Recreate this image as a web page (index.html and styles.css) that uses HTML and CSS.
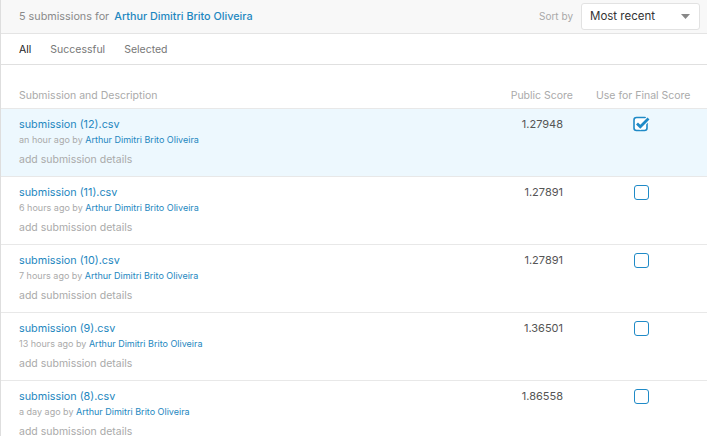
FILE: index.html
```html
<!DOCTYPE html>
<html>
<head>
<meta charset="utf-8">
<link rel="stylesheet" href="styles.css">
</head>
<body>
<div class="page">
  <div class="topbar">
    <div class="count">5 submissions for <a class="user">Arthur Dimitri Brito Oliveira</a></div>
    <div class="sort">
      <span class="sort-label">Sort by</span>
      <div class="select">
        <span>Most recent</span>
        <svg class="caret" width="9" height="5" viewBox="0 0 9 5"><path d="M0 0h9L4.5 5z" fill="#888"/></svg>
      </div>
    </div>
  </div>
  <div class="tabs">
    <span class="tab active">All</span>
    <span class="tab">Successful</span>
    <span class="tab">Selected</span>
  </div>
  <div class="thead">
    <span class="col-desc">Submission and Description</span>
    <span class="col-score">Public Score</span>
    <span class="col-use">Use for Final Score</span>
  </div>
  <div class="row selected">
    <div class="desc">
      <div class="name">submission (12).csv</div>
      <div class="meta">an hour ago by <span class="by">Arthur Dimitri Brito Oliveira</span></div>
      <div class="details">add submission details</div>
    </div>
    <div class="score">1.27948</div>
    <div class="use"><svg class="check" width="18" height="16" viewBox="0 0 18 16"><rect x="1" y="1.5" width="13" height="13" rx="2.5" fill="#fff" stroke="#1f8ac7" stroke-width="1.6"/><path d="M4 7.5l3.3 3.3L15.5 2.6" fill="none" stroke="#fff" stroke-width="5"/><path d="M4 7.5l3.3 3.3L15.5 2.6" fill="none" stroke="#1f8ac7" stroke-width="2.8"/></svg></div>
  </div>
  <div class="row">
    <div class="desc">
      <div class="name">submission (11).csv</div>
      <div class="meta">6 hours ago by <span class="by">Arthur Dimitri Brito Oliveira</span></div>
      <div class="details">add submission details</div>
    </div>
    <div class="score">1.27891</div>
    <div class="use"><span class="box"></span></div>
  </div>
  <div class="row">
    <div class="desc">
      <div class="name">submission (10).csv</div>
      <div class="meta">7 hours ago by <span class="by">Arthur Dimitri Brito Oliveira</span></div>
      <div class="details">add submission details</div>
    </div>
    <div class="score">1.27891</div>
    <div class="use"><span class="box"></span></div>
  </div>
  <div class="row">
    <div class="desc">
      <div class="name">submission (9).csv</div>
      <div class="meta">13 hours ago by <span class="by">Arthur Dimitri Brito Oliveira</span></div>
      <div class="details">add submission details</div>
    </div>
    <div class="score">1.36501</div>
    <div class="use"><span class="box"></span></div>
  </div>
  <div class="row">
    <div class="desc">
      <div class="name">submission (8).csv</div>
      <div class="meta">a day ago by <span class="by">Arthur Dimitri Brito Oliveira</span></div>
      <div class="details">add submission details</div>
    </div>
    <div class="score">1.86558</div>
    <div class="use"><span class="box"></span></div>
  </div>
</div>
</body>
</html>
```
FILE: styles.css
```css
* { box-sizing: border-box; }
html, body { margin: 0; padding: 0; background: #fff; }
body { font-family: Inter, "Noto Sans", sans-serif; color: #3c3c3c; width: 707px; height: 436px; overflow: hidden; }
.page { border-left: 1px solid #dedede; min-height: 436px; }
.topbar {
  height: 34px;
  background: #f8f8f8;
  border-bottom: 1px solid #e4e4e4;
  display: flex;
  align-items: center;
  justify-content: space-between;
  padding: 0 7px 1px 18px;
}
.count { font-size: 10.8px; color: #8a8a8a; }
.user { color: #1e87c0; font-weight: 500; margin-left: 2px; }
.sort { display: flex; align-items: center; gap: 8px; }
.sort-label { font-size: 10px; color: #a8a8a8; }
.select {
  width: 119px; height: 27px;
  background: #fff;
  border: 1px solid #e2e2e2;
  border-radius: 3px;
  display: flex; align-items: center; justify-content: space-between;
  padding: 0 9px 0 8px;
  font-size: 11.5px; color: #333;
}
.caret { margin-top: 1px; }
.tabs {
  height: 31px;
  border-bottom: 1px solid #e0e0e0;
  display: flex; align-items: center;
  padding-left: 18px; gap: 19px;
  font-size: 10.5px; color: #777;
}
.tab.active { color: #222; }
.thead {
  height: 43px;
  display: flex; align-items: flex-end;
  padding: 0 0 6px 18px;
  font-size: 10.5px; color: #aaa;
  white-space: nowrap;
}
.col-desc { flex: 1; }
.col-score { width: 80px; text-align: right; }
.col-use { width: 134px; padding-left: 23px; }
.row {
  height: 68px;
  border-top: 1px solid #e8e8e8;
  display: flex;
  padding: 8px 0 0 18px;
}
.row.selected { background: #edf8fe; }
.desc { flex: 1; }
.name { font-size: 10.8px; color: #1e87c0; line-height: 15px; }
.meta { font-size: 9px; color: #aaa; line-height: 12px; margin-top: 2px; }
.meta .by { color: #1e87c0; }
.details { font-size: 10.5px; color: #aaa; line-height: 14px; margin-top: 7px; }
.score { width: 80px; padding-right: 10px; text-align: right; font-size: 11px; color: #555; line-height: 15px; }
.use { width: 134px; padding-left: 60px; padding-top: 0; }
.check { display: block; margin-top: -1px; }
.box {
  display: block;
  width: 15px; height: 15px;
  margin-left: 1px;
  border: 1.6px solid #1f8ac7;
  border-radius: 3px;
  background: #fff;
}
```
